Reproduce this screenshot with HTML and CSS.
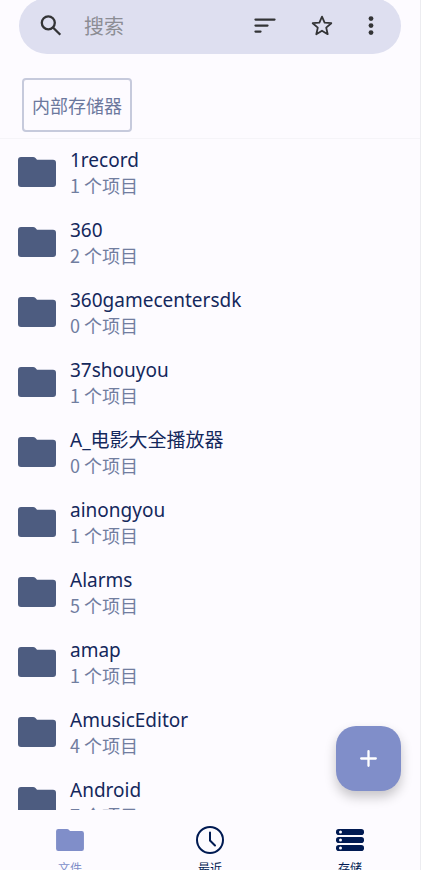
FILE: index.html
```html
<!DOCTYPE html>
<html lang="zh-CN">
<head>
<meta charset="utf-8">
<meta name="viewport" content="width=device-width, initial-scale=1">
<title>文件</title>
<link rel="stylesheet" href="styles.css">
</head>
<body>
<svg class="defs" aria-hidden="true">
  <symbol id="folder" viewBox="0 0 38 30"><path d="M3 0H15Q16.500 0 17.500 1L19 2.700H35Q38 2.700 38 5.700V27Q38 30 35 30H3Q0 30 0 27V3Q0 0 3 0Z"/></symbol>
</svg>
<div class="app">
  <header class="top">
    <form class="search" role="search">
      <label class="search-icon" for="q" aria-label="搜索">
        <svg width="22" height="22" viewBox="0 0 22 22"><g fill="none" stroke="currentColor" stroke-width="2.300"><circle cx="8.300" cy="7.800" r="6.500"/><path d="M13 12.500L20.300 19.800"/></g></svg>
      </label>
      <input class="search-input" id="q" type="text" placeholder="搜索">
      <button class="tool" type="button" aria-label="排序">
        <svg width="22" height="16" viewBox="0 0 22 16"><path d="M1.500 1.600H20.500M1.500 7.600H13.500M1.500 13.600H6.500" stroke="currentColor" stroke-width="2.300" stroke-linecap="round"/></svg>
      </button>
      <button class="tool" type="button" aria-label="收藏">
        <svg width="22" height="22" viewBox="0 0 22 22"><path d="M11 1.600L13.600 7.600L20.300 8.200L15.200 12.600L16.700 19.200L11 15.700L5.300 19.200L6.800 12.600L1.700 8.200L8.400 7.600Z" fill="none" stroke="currentColor" stroke-width="1.800" stroke-linejoin="round"/></svg>
      </button>
      <button class="tool tool-more" type="button" aria-label="更多">
        <svg width="6" height="20" viewBox="0 0 6 20" fill="currentColor"><circle cx="3" cy="2.600" r="2.400"/><circle cx="3" cy="9.600" r="2.400"/><circle cx="3" cy="16.600" r="2.400"/></svg>
      </button>
    </form>
    <button class="crumb" type="button">内部存储器</button>
  </header>

  <main class="content">
    <ul class="list">
      <li class="row"><svg class="folder"><use href="#folder"/></svg><div class="text"><div class="name">1record</div><div class="count">1 个项目</div></div></li>
      <li class="row"><svg class="folder"><use href="#folder"/></svg><div class="text"><div class="name">360</div><div class="count">2 个项目</div></div></li>
      <li class="row"><svg class="folder"><use href="#folder"/></svg><div class="text"><div class="name">360gamecentersdk</div><div class="count">0 个项目</div></div></li>
      <li class="row"><svg class="folder"><use href="#folder"/></svg><div class="text"><div class="name">37shouyou</div><div class="count">1 个项目</div></div></li>
      <li class="row"><svg class="folder"><use href="#folder"/></svg><div class="text"><div class="name">A_电影大全播放器</div><div class="count">0 个项目</div></div></li>
      <li class="row"><svg class="folder"><use href="#folder"/></svg><div class="text"><div class="name">ainongyou</div><div class="count">1 个项目</div></div></li>
      <li class="row"><svg class="folder"><use href="#folder"/></svg><div class="text"><div class="name">Alarms</div><div class="count">5 个项目</div></div></li>
      <li class="row"><svg class="folder"><use href="#folder"/></svg><div class="text"><div class="name">amap</div><div class="count">1 个项目</div></div></li>
      <li class="row"><svg class="folder"><use href="#folder"/></svg><div class="text"><div class="name">AmusicEditor</div><div class="count">4 个项目</div></div></li>
      <li class="row"><svg class="folder"><use href="#folder"/></svg><div class="text"><div class="name">Android</div><div class="count">7 个项目</div></div></li>
    </ul>
    <button class="fab" type="button" aria-label="新建">
      <svg width="17" height="17" viewBox="0 0 17 17"><path d="M8.500 1.200V15.800M1.200 8.500H15.800" stroke="currentColor" stroke-width="2.300" stroke-linecap="round"/></svg>
    </button>
  </main>

  <nav class="tabs">
    <a class="tab tab-active" href="#files">
      <svg class="tab-icon" viewBox="0 0 30 30"><svg x="1" y="4" width="28" height="22"><use href="#folder" fill="currentColor"/></svg></svg>
      <span>文件</span>
    </a>
    <a class="tab" href="#recent">
      <svg class="tab-icon" viewBox="0 0 30 30"><g fill="none" stroke="currentColor" stroke-width="2"><circle cx="15" cy="15" r="13"/><path d="M15 7.500V15.500L20 20.500" stroke-linecap="round"/></g></svg>
      <span>最近</span>
    </a>
    <a class="tab" href="#storage">
      <svg class="tab-icon" viewBox="0 0 30 30"><g fill="currentColor"><rect x="1" y="4" width="28" height="6" rx="2.800"/><rect x="1" y="12" width="28" height="6" rx="2.800"/><rect x="1" y="20" width="28" height="6" rx="2.800"/></g><g class="lights"><circle cx="5.500" cy="7" r="1.500"/><circle cx="5.500" cy="15" r="1.500"/><circle cx="5.500" cy="23" r="1.500"/></g></svg>
      <span>存储</span>
    </a>
  </nav>
</div>
</body>
</html>
```

FILE: styles.css
```css
* { box-sizing: border-box; }

body {
  margin: 0;
  background: #fdfbff;
  color: #14285c;
  font-family: "Noto Sans", "Noto Sans CJK SC", sans-serif;
}

button {
  padding: 0;
  border: 0;
  background: none;
  color: inherit;
  font: inherit;
}

.defs {
  position: absolute;
  width: 0;
  height: 0;
}

.app {
  display: flex;
  flex-direction: column;
  height: 100vh;
  overflow: hidden;
  border-right: 1px solid #ececf0;
}

.top {
  flex: none;
  padding: 0 19px 6px;
  border-bottom: 1px solid #f5f4f8;
}

.search {
  display: flex;
  align-items: center;
  height: 56px;
  margin-top: -2px;
  padding: 0 27px 0 21px;
  border-radius: 28px;
  background: #dedff0;
  color: #333436;
}

.search-icon { display: flex; }

.search-input {
  flex: 1;
  min-width: 0;
  margin-left: 22px;
  padding: 0;
  border: 0;
  background: none;
  font: 20px/28px "Noto Sans CJK SC", sans-serif;
  color: #333436;
}

.search-input::placeholder { color: #8c8d94; }

.tool {
  display: flex;
  margin-left: 35px;
}

.crumb {
  height: 54px;
  margin: 24px 3px 0;
  padding: 0 8px;
  border: 2px solid #c6cadc;
  border-radius: 4px;
  color: #6c789d;
  font: 18px/26px "Noto Sans CJK SC", sans-serif;
}

.content {
  position: relative;
  flex: 1;
  min-height: 0;
}

.list {
  height: 100%;
  margin: 0;
  padding: 0;
  overflow: hidden;
  list-style: none;
}

.row {
  display: flex;
  align-items: flex-start;
  gap: 14px;
  height: 70px;
  padding: 18px 18px 0;
}

.folder {
  flex: none;
  width: 38px;
  height: 30px;
  fill: #4d5c80;
}

.text { margin-top: -9px; }

.name {
  font-size: 19px;
  line-height: 25px;
}

.count {
  color: #717d9f;
  font: 18px/25px "Noto Sans CJK SC", sans-serif;
}

.fab {
  position: absolute;
  right: 19px;
  bottom: 19px;
  display: flex;
  align-items: center;
  justify-content: center;
  width: 65px;
  height: 65px;
  border-radius: 20px;
  background: #808ec9;
  color: #fff;
  box-shadow: 0 6px 12px rgba(0, 0, 0, 0.22);
}

.tabs {
  display: flex;
  flex: none;
  height: 60px;
  padding-top: 15px;
  overflow: hidden;
}

.tab {
  display: flex;
  flex: 1;
  flex-direction: column;
  align-items: center;
  gap: 4px;
  color: #001a52;
  font: 12px/18px "Noto Sans CJK SC", sans-serif;
  text-decoration: none;
}

.tab-active { color: #808ec9; }

.tab-icon {
  flex: none;
  width: 30px;
  height: 30px;
}

.lights { fill: #fdfbff; }
```
